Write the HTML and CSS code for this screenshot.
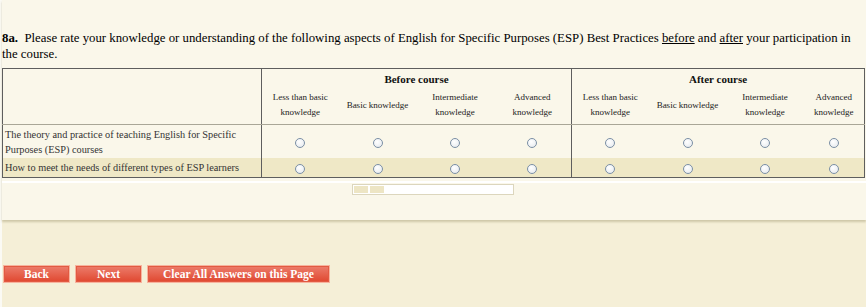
FILE: index.html
```html
<!DOCTYPE html>
<html lang="en">
<head>
    <meta charset="UTF-8">
    <title>Survey - Question 8a</title>
    <link rel="stylesheet" href="styles.css">
</head>
<body>
    <main class="page">
        <section class="survey">
            <p class="question"><b>8a.</b>&nbsp; Please rate your knowledge or understanding of the following aspects of English for Specific Purposes (ESP) Best Practices <u>before</u> and <u>after</u> your participation in<br>the course.</p>

            <table class="grid">
                <colgroup>
                    <col class="col-label">
                    <col class="col-scale">
                    <col class="col-scale-wide">
                    <col class="col-scale">
                    <col class="col-scale-wide">
                    <col class="col-scale">
                    <col class="col-scale-wide">
                    <col class="col-scale">
                    <col class="col-last">
                </colgroup>
                <thead>
                    <tr class="group-row">
                        <th class="label-col" rowspan="2"></th>
                        <th class="group" colspan="4">Before course</th>
                        <th class="group" colspan="4">After course</th>
                    </tr>
                    <tr class="scale-row">
                        <th class="first">Less than basic knowledge</th>
                        <th>Basic knowledge</th>
                        <th>Intermediate knowledge</th>
                        <th>Advanced knowledge</th>
                        <th class="first">Less than basic knowledge</th>
                        <th>Basic knowledge</th>
                        <th>Intermediate knowledge</th>
                        <th>Advanced knowledge</th>
                    </tr>
                </thead>
                <tbody>
                    <tr>
                        <td class="label">The theory and practice of teaching English for Specific Purposes (ESP) courses</td>
                        <td class="first"><span class="radio"></span></td>
                        <td><span class="radio"></span></td>
                        <td><span class="radio"></span></td>
                        <td><span class="radio"></span></td>
                        <td class="first"><span class="radio"></span></td>
                        <td><span class="radio"></span></td>
                        <td><span class="radio"></span></td>
                        <td><span class="radio"></span></td>
                    </tr>
                    <tr class="alt">
                        <td class="label">How to meet the needs of different types of ESP learners</td>
                        <td class="first"><span class="radio"></span></td>
                        <td><span class="radio"></span></td>
                        <td><span class="radio"></span></td>
                        <td><span class="radio"></span></td>
                        <td class="first"><span class="radio"></span></td>
                        <td><span class="radio"></span></td>
                        <td><span class="radio"></span></td>
                        <td><span class="radio"></span></td>
                    </tr>
                </tbody>
            </table>

            <div class="progress-wrap">
                <div class="progress">
                    <span class="step"></span>
                    <span class="step"></span>
                </div>
            </div>
        </section>

        <footer class="nav">
            <button class="btn btn-short">Back</button>
            <button class="btn btn-short">Next</button>
            <button class="btn btn-wide">Clear All Answers on this Page</button>
        </footer>
    </main>
</body>
</html>
```

FILE: styles.css
```css
:root {
    --page-color: #faf7ea;
    --footer-color: #f5efd7;
    --alt-row: #efe8c6;
    --border-dark: #5e5e5e;
    --border-light: #a9a697;
    --text-color: #333333;
}

html, body {
    margin: 0;
    padding: 0;
    background: var(--footer-color);
}

body {
    font-family: "Liberation Serif", "Times New Roman", serif;
    color: #000;
}

.page {
    width: 866px;
    height: 307px;
    border-left: 2px solid #fbfaf4;
    box-sizing: border-box;
}

.survey {
    background: var(--page-color);
    padding-top: 30px;
    height: 220px;
    box-sizing: border-box;
    box-shadow: 0 2px 2px rgba(160, 150, 110, 0.45);
}

.question {
    margin: 0 0 6px 0;
    font-size: 12.8px;
    line-height: 16px;
    padding-right: 2px;
}

.grid {
    width: 862px;
    border-collapse: collapse;
    border: 1px solid var(--border-dark);
    table-layout: fixed;
    color: var(--text-color);
}

.col-label { width: 259px; }
.col-scale { width: 77px; }
.col-scale-wide { width: 78px; }
.col-last { width: 61px; }

.grid th, .grid td {
    padding: 0;
    text-align: center;
    vertical-align: middle;
}

.label-col {
    border-right: 1px solid var(--border-dark);
    border-bottom: 1px solid var(--border-light);
}

.group {
    font-size: 11px;
    font-weight: bold;
    color: #111;
    height: 19px;
    padding-top: 2px;
}

.group + .group {
    border-left: 1px solid var(--border-dark);
}

.scale-row th {
    font-size: 9px;
    font-weight: normal;
    line-height: 15px;
    height: 34px;
    padding: 0 4px 2px;
    color: #222;
    border-bottom: 1px solid var(--border-light);
}

.scale-row th.first, .grid td.first {
    border-left: 1px solid var(--border-dark);
}

.grid td.label {
    text-align: left;
    font-size: 10.3px;
    line-height: 15px;
    padding: 2px 16px 1px 2px;
    border-right: 1px solid var(--border-dark);
}

.grid tbody tr:first-child td {
    height: 30px;
}

.grid tr.alt td {
    background: var(--alt-row);
    height: 19px;
    padding-top: 0;
    padding-bottom: 0;
}

.radio {
    display: inline-block;
    width: 8px;
    height: 8px;
    border: 1.5px solid #7b8fa4;
    border-radius: 50%;
    background: radial-gradient(circle at 40% 35%, #ffffff, #e3e7ec);
    vertical-align: middle;
}

.progress-wrap {
    border-top: 2px solid #ffffff;
    margin-top: 3px;
    padding-top: 1px;
}

.progress {
    margin-left: 350px;
    width: 158px;
    height: 7px;
    padding: 1px;
    border: 1px solid #dcd6bd;
    background: #ffffff;
    display: flex;
    gap: 2px;
}

.step {
    width: 14px;
    background: #ede5c4;
}

.nav {
    display: flex;
    gap: 5px;
    padding-top: 45px;
    padding-left: 1px;
}

.btn {
    height: 18px;
    border: 1px solid #f7b39e;
    outline: 1px solid #e25a42;
    outline-offset: -2px;
    background: linear-gradient(#ec7d6c, #e0472f);
    color: #ffffff;
    font-family: "Liberation Serif", "Times New Roman", serif;
    font-weight: bold;
    font-size: 11.5px;
    padding: 0;
}

.btn-short {
    width: 67px;
}

.btn-wide {
    width: 183px;
}
```
